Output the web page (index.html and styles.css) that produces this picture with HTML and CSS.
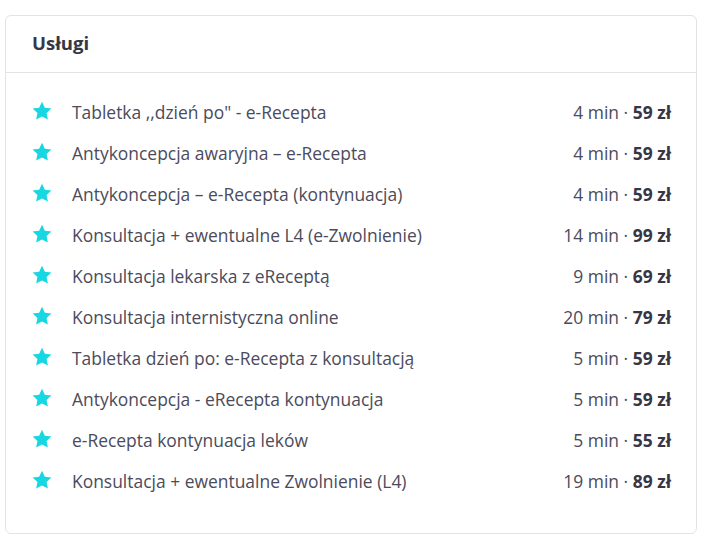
FILE: index.html
```html
<!DOCTYPE html>
<html lang="pl">
<head>
<meta charset="utf-8">
<link rel="stylesheet" href="styles.css">
</head>
<body>
<div class="card">
  <div class="card-header"><h2 class="title">Usługi</h2></div>
  <ul class="list">
    <li class="row"><svg class="star" viewBox="0 0 24 24"><path d="M12 1.8l3.1 6.6 7.2.9-5.3 5 1.4 7.1L12 17.9l-6.4 3.5 1.4-7.1-5.3-5 7.2-.9z"/></svg><span class="name">Tabletka ,,dzień po" - e-Recepta</span><span class="meta">4 min · <b>59 zł</b></span></li>
    <li class="row"><svg class="star" viewBox="0 0 24 24"><path d="M12 1.8l3.1 6.6 7.2.9-5.3 5 1.4 7.1L12 17.9l-6.4 3.5 1.4-7.1-5.3-5 7.2-.9z"/></svg><span class="name">Antykoncepcja awaryjna – e-Recepta</span><span class="meta">4 min · <b>59 zł</b></span></li>
    <li class="row"><svg class="star" viewBox="0 0 24 24"><path d="M12 1.8l3.1 6.6 7.2.9-5.3 5 1.4 7.1L12 17.9l-6.4 3.5 1.4-7.1-5.3-5 7.2-.9z"/></svg><span class="name">Antykoncepcja – e-Recepta (kontynuacja)</span><span class="meta">4 min · <b>59 zł</b></span></li>
    <li class="row"><svg class="star" viewBox="0 0 24 24"><path d="M12 1.8l3.1 6.6 7.2.9-5.3 5 1.4 7.1L12 17.9l-6.4 3.5 1.4-7.1-5.3-5 7.2-.9z"/></svg><span class="name">Konsultacja + ewentualne L4 (e-Zwolnienie)</span><span class="meta">14 min · <b>99 zł</b></span></li>
    <li class="row"><svg class="star" viewBox="0 0 24 24"><path d="M12 1.8l3.1 6.6 7.2.9-5.3 5 1.4 7.1L12 17.9l-6.4 3.5 1.4-7.1-5.3-5 7.2-.9z"/></svg><span class="name">Konsultacja lekarska z eReceptą</span><span class="meta">9 min · <b>69 zł</b></span></li>
    <li class="row"><svg class="star" viewBox="0 0 24 24"><path d="M12 1.8l3.1 6.6 7.2.9-5.3 5 1.4 7.1L12 17.9l-6.4 3.5 1.4-7.1-5.3-5 7.2-.9z"/></svg><span class="name">Konsultacja internistyczna online</span><span class="meta">20 min · <b>79 zł</b></span></li>
    <li class="row"><svg class="star" viewBox="0 0 24 24"><path d="M12 1.8l3.1 6.6 7.2.9-5.3 5 1.4 7.1L12 17.9l-6.4 3.5 1.4-7.1-5.3-5 7.2-.9z"/></svg><span class="name">Tabletka dzień po: e-Recepta z konsultacją</span><span class="meta">5 min · <b>59 zł</b></span></li>
    <li class="row"><svg class="star" viewBox="0 0 24 24"><path d="M12 1.8l3.1 6.6 7.2.9-5.3 5 1.4 7.1L12 17.9l-6.4 3.5 1.4-7.1-5.3-5 7.2-.9z"/></svg><span class="name">Antykoncepcja - eRecepta kontynuacja</span><span class="meta">5 min · <b>59 zł</b></span></li>
    <li class="row"><svg class="star" viewBox="0 0 24 24"><path d="M12 1.8l3.1 6.6 7.2.9-5.3 5 1.4 7.1L12 17.9l-6.4 3.5 1.4-7.1-5.3-5 7.2-.9z"/></svg><span class="name">e-Recepta kontynuacja leków</span><span class="meta">5 min · <b>55 zł</b></span></li>
    <li class="row"><svg class="star" viewBox="0 0 24 24"><path d="M12 1.8l3.1 6.6 7.2.9-5.3 5 1.4 7.1L12 17.9l-6.4 3.5 1.4-7.1-5.3-5 7.2-.9z"/></svg><span class="name">Konsultacja + ewentualne Zwolnienie (L4)</span><span class="meta">19 min · <b>89 zł</b></span></li>
  </ul>
</div>
</body>
</html>
```

FILE: styles.css
```css
* { box-sizing: border-box; }
html, body { margin: 0; padding: 0; background: #fff; }
body {
  padding: 15px 7px 7px 5px;
  font-family: "Open Sans", "Noto Sans", sans-serif;
  color: #4b4b5c;
}
.card {
  width: 692px;
  border: 1px solid #e3e3e6;
  border-radius: 6px;
  background: #fff;
}
.card-header {
  height: 57px;
  border-bottom: 1px solid #e3e3e6;
  display: flex;
  align-items: center;
  padding: 0 26px 3px;
}
.title {
  margin: 0;
  font-size: 18.5px;
  font-weight: 700;
  color: #363645;
}
.list {
  list-style: none;
  margin: 0;
  padding: 18px 25px 32px 25px;
}
.row {
  height: 41px;
  display: flex;
  align-items: center;
  font-size: 17.45px;
}
.star {
  width: 22px;
  height: 22px;
  fill: #17d7e2;
  margin-right: 19px;
  flex: none;
  position: relative;
  top: -1px;
}
.name { flex: 1; }
.meta { white-space: nowrap; }
.meta b { font-weight: 700; color: #363645; }
```
